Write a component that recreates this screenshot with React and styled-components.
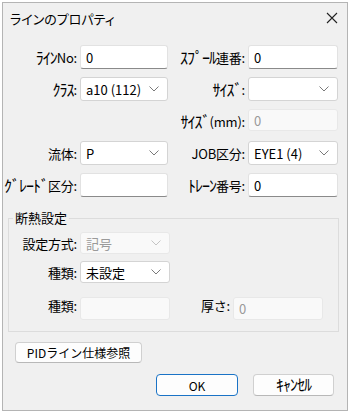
import React from "react";
import styled, { createGlobalStyle } from "styled-components";

const GlobalStyle = createGlobalStyle`
  html, body {
    margin: 0;
    padding: 0;
    background: #ffffff;
  }
  body {
    font-family: "Noto Sans CJK JP", "Noto Sans", sans-serif;
    font-size: 13px;
    color: #000;
  }
`;

const Window = styled.div`
  box-sizing: border-box;
  margin: 2px;
  width: 346px;
  height: 409px;
  border: 1px solid #b4b4b4;
  background: #f0f0f0;
  display: flex;
  flex-direction: column;
`;

const TitleBar = styled.div`
  height: 30px;
  display: flex;
  align-items: center;
  justify-content: space-between;
  padding: 0 8px 0 7px;
`;

const Title = styled.span`
  font-size: 13px;
  font-feature-settings: "palt";
`;

const CloseButton = styled.span`
  display: flex;
  width: 14px;
  height: 14px;
  align-items: center;
  justify-content: center;
`;

const FormGrid = styled.div`
  display: grid;
  grid-template-columns: 77px 88px 80px 90px;
  grid-auto-rows: 24px;
  row-gap: 8px;
  margin-top: 12px;
`;

const Label = styled.label`
  display: flex;
  align-items: center;
  justify-content: flex-end;
  padding-right: 3px;
  white-space: nowrap;
  font-size: 13px;
  letter-spacing: -0.2px;
`;

// half-width katakana render small in Noto, so they get a larger size
const Kana = styled.span`
  font-size: 16px;
  letter-spacing: -1px;
  line-height: 1;
`;

const Field = styled.div`
  box-sizing: border-box;
  display: flex;
  align-items: center;
  justify-content: space-between;
  height: ${(p) => (p.$h ? p.$h : 24)}px;
  padding: 0 8px 0 5px;
  background: ${(p) => (p.$disabled ? "#f9f9f9" : "#ffffff")};
  color: ${(p) => (p.$disabled ? "#9a9a9a" : "#000")};
  border: 1px solid ${(p) => (p.$disabled ? "#e8e8e8" : "#e2e2e2")};
  border-bottom-color: ${(p) =>
    p.$disabled ? "#e8e8e8" : p.$select ? "#cfcfcf" : "#8a8a8a"};
  border-radius: 3px;
  font-size: 13px;
  ${(p) => p.$select && !p.$disabled && "border-color: #d4d4d4;"}
`;

const Chevron = ({ disabled }) => (
  <svg width="10" height="6" viewBox="0 0 10 6">
    <polyline
      points="0.5,0.5 5,5 9.5,0.5"
      fill="none"
      stroke={disabled ? "#c4c4c4" : "#7a7a7a"}
      strokeWidth="1"
    />
  </svg>
);

const Group = styled.fieldset`
  box-sizing: border-box;
  margin: 13px 0 0 5px;
  width: 331px;
  padding: 6px 0 18px 0;
  border: 1px solid #dcdcdc;
`;

const Legend = styled.legend`
  padding: 0 2px;
  margin-left: 4px;
  font-size: 13px;
  line-height: 16px;
`;

const GroupGrid = styled.div`
  display: grid;
  grid-template-columns: 71px 90px 63px 90px;
  grid-template-rows: 22px 22px 23px;
  row-gap: 7px;
  & > :nth-child(n + 9) {
    margin-top: 7px;
  }
`;

const ButtonRow = styled.div`
  display: flex;
  justify-content: ${(p) => p.$justify || "flex-start"};
  gap: 15px;
  padding: ${(p) => p.$pad};
`;

const Button = styled.button`
  box-sizing: border-box;
  height: ${(p) => p.$h || 22}px;
  width: ${(p) => p.$w}px;
  background: #fdfdfd;
  border: 1px solid ${(p) => (p.$primary ? "#1a73c6" : "#d0d0d0")};
  border-bottom-color: ${(p) => (p.$primary ? "#1a73c6" : "#b8b8b8")};
  border-radius: 4px;
  font-family: "Noto Sans CJK JP", "Noto Sans", sans-serif;
  font-size: 12px;
  color: #000;
  padding: 0;
`;

const TextField = ({ value, disabled, h }) => (
  <Field $disabled={disabled} $h={h}>
    <span>{value}</span>
  </Field>
);

const SelectField = ({ value, disabled, h }) => (
  <Field $select $disabled={disabled} $h={h}>
    <span>{value}</span>
    <Chevron disabled={disabled} />
  </Field>
);

export default function App() {
  return (
    <>
      <GlobalStyle />
      <Window>
        <TitleBar>
          <Title>ラインのプロパティ</Title>
          <CloseButton>
            <svg width="12" height="12" viewBox="0 0 12 12">
              <path d="M1 1 L11 11 M11 1 L1 11" stroke="#222" strokeWidth="1.1" />
            </svg>
          </CloseButton>
        </TitleBar>

        <FormGrid>
          <Label><Kana>ﾗｲﾝ</Kana>No:</Label>
          <TextField value="0" />
          <Label><Kana>ｽﾌﾟｰﾙ</Kana>連番:</Label>
          <TextField value="0" />

          <Label><Kana>ｸﾗｽ</Kana>:</Label>
          <SelectField value="a10 (112)" />
          <Label><Kana>ｻｲｽﾞ</Kana>:</Label>
          <SelectField value="" />

          <span />
          <span />
          <Label><Kana>ｻｲｽﾞ</Kana>(mm):</Label>
          <TextField value="0" disabled h={22} />

          <Label>流体:</Label>
          <SelectField value="P" />
          <Label>JOB区分:</Label>
          <SelectField value="EYE1 (4)" />

          <Label><Kana>ｸﾞﾚｰﾄﾞ</Kana>区分:</Label>
          <TextField value="" />
          <Label><Kana>ﾄﾚｰﾝ</Kana>番号:</Label>
          <TextField value="0" />
        </FormGrid>

        <Group>
          <Legend>断熱設定</Legend>
          <GroupGrid>
            <Label>設定方式:</Label>
            <SelectField value="記号" disabled h={22} />
            <span />
            <span />

            <Label>種類:</Label>
            <SelectField value="未設定" h={22} />
            <span />
            <span />

            <Label>種類:</Label>
            <TextField value="" disabled h={23} />
            <Label>厚さ:</Label>
            <TextField value="0" disabled h={23} />
          </GroupGrid>
        </Group>

        <ButtonRow $pad="10px 0 0 12px">
          <Button $w={127} $h={21}>PIDライン仕様参照</Button>
        </ButtonRow>
        <ButtonRow $justify="flex-end" $pad="11px 13px 0 0">
          <Button $primary $w={82}>OK</Button>
          <Button $w={81}>
            <Kana>ｷｬﾝｾﾙ</Kana>
          </Button>
        </ButtonRow>
      </Window>
    </>
  );
}
